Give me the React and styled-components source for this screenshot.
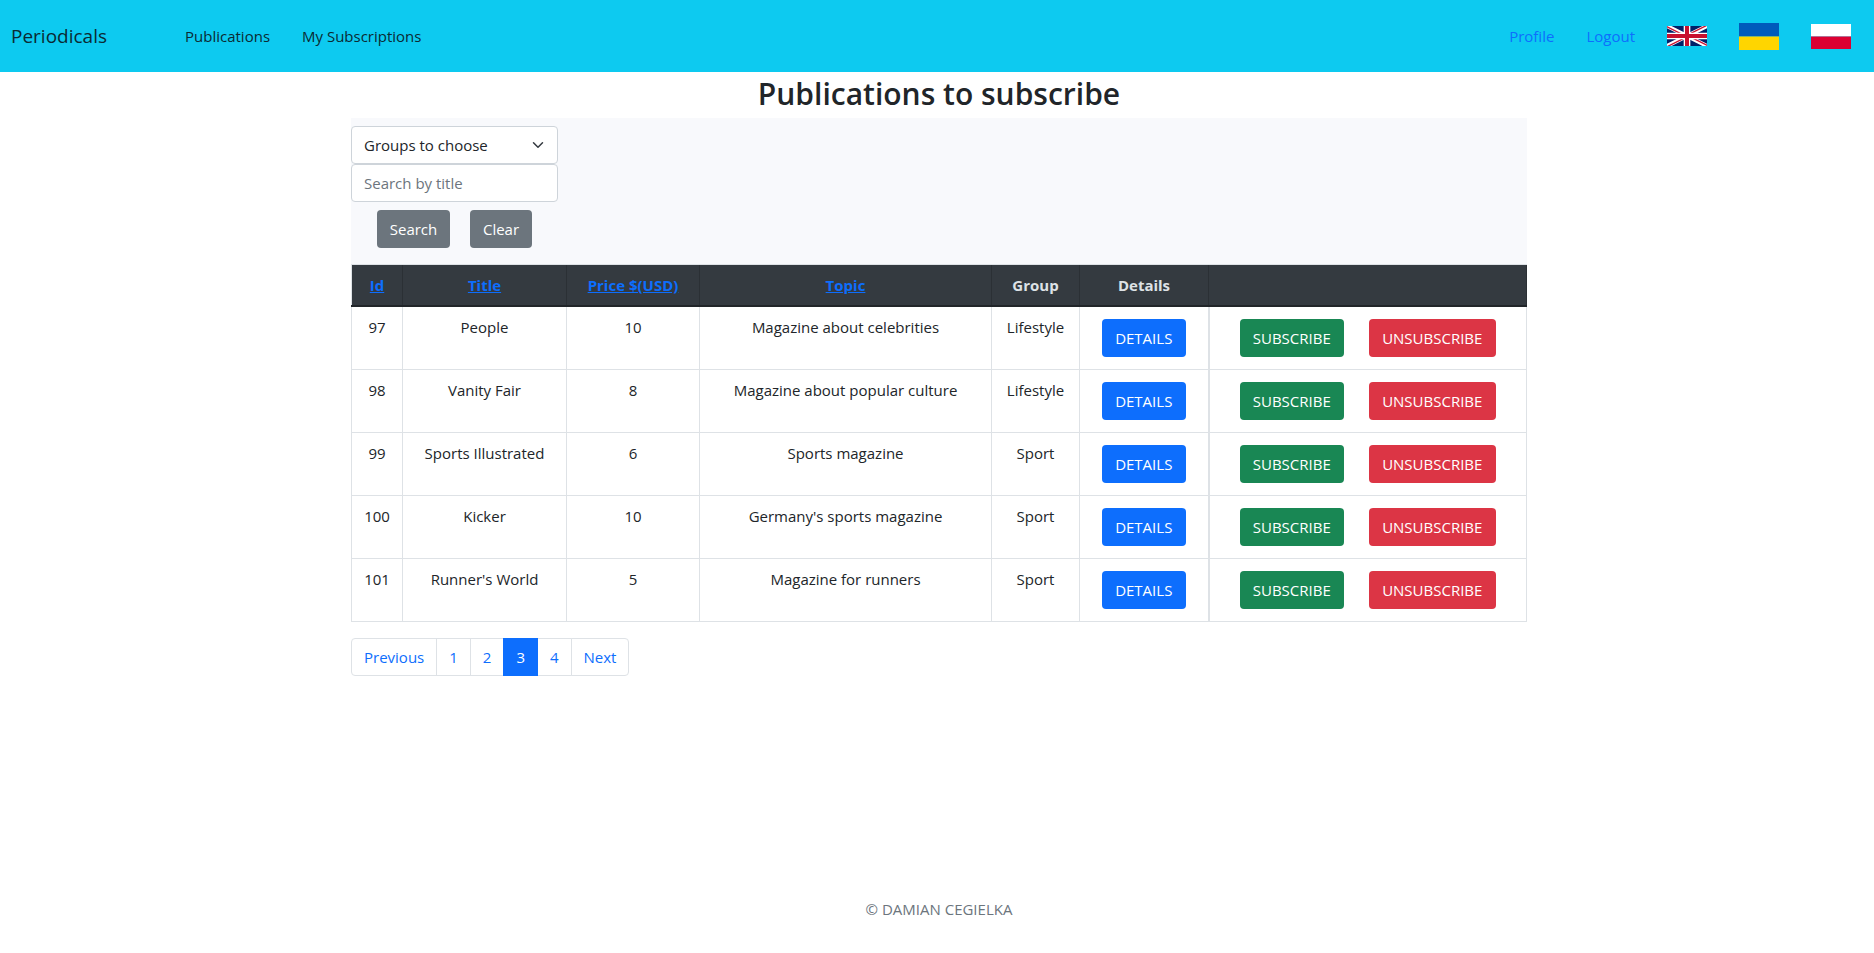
import React from "react";
import styled, { createGlobalStyle } from "styled-components";

const GlobalStyle = createGlobalStyle`
  *, *::before, *::after { box-sizing: border-box; }
  body {
    margin: 0;
    background: #fff;
    color: #212529;
    font-family: "Open Sans", "Noto Sans", sans-serif;
    font-size: 15px;
    line-height: 24px;
  }
  button, input, select { font: inherit; }
  a { color: #0d6efd; }
`;

const Page = styled.div`
  display: flex;
  flex-direction: column;
  min-height: 100vh;
`;

const NavBar = styled.nav`
  display: flex;
  align-items: center;
  height: 72px;
  padding: 0 23px 0 11px;
  background: #0dcaf0;
`;

const Brand = styled.a`
  margin-right: 78px;
  color: #0b2a33;
  font-size: 19px;
  text-decoration: none;
`;

const NavGroup = styled.div`
  display: flex;
  align-items: center;
  gap: 32px;
  margin-left: ${(p) => (p.$end ? "auto" : "0")};
`;

const NavLink = styled.a`
  display: flex;
  color: ${(p) => (p.$accent ? "#0d6efd" : "#0b2a33")};
  text-decoration: none;
`;

const Main = styled.main`
  width: 100%;
  max-width: 1180px;
  margin: 0 auto;
  padding-left: 4px;
`;

const Footer = styled.footer`
  margin-top: auto;
  padding: 32px 0 32px 4px;
  color: #6c757d;
  text-align: center;
`;

const Title = styled.h1`
  margin: 0;
  padding: 2px 0 4px;
  font-size: 30px;
  font-weight: 600;
  line-height: 40px;
  text-align: center;
`;

const Filters = styled.form`
  padding: 8px 0 16px;
  border-bottom: 1px solid #dee2e6;
  background: #f8f9fc;
`;

const Fields = styled.div`
  display: flex;
  flex-direction: column;
  width: 207px;
`;

const SelectWrap = styled.div`
  display: grid;
  align-items: center;
  > * { grid-area: 1 / 1; }
  svg {
    justify-self: end;
    margin-right: 12px;
    pointer-events: none;
  }
`;

const fieldLook = `
  width: 100%;
  height: 38px;
  padding: 0 12px;
  border: 1px solid #ced4da;
  border-radius: 4px;
  background: #fff;
  color: #212529;
`;

const Select = styled.select`
  ${fieldLook}
  appearance: none;
`;

const TextBox = styled.input`
  ${fieldLook}
  &::placeholder { color: #6c757d; opacity: 1; }
`;

const FilterActions = styled.div`
  display: flex;
  justify-content: center;
  gap: 20px;
  margin-top: 8px;
`;

const tones = {
  primary: "#0d6efd",
  secondary: "#6c757d",
  success: "#198754",
  danger: "#dc3545",
};

const Button = styled.button`
  min-width: ${(p) => p.$width}px;
  height: 38px;
  padding: 0 8px;
  border: 0;
  border-radius: 4px;
  background: ${(p) => tones[p.$tone]};
  color: #fff;
  cursor: pointer;
`;

const Table = styled.table`
  width: 100%;
  border-collapse: collapse;
  table-layout: fixed;
`;

const Col = styled.col`
  width: ${(p) => (p.$width ? `${p.$width}px` : "auto")};
`;

const HeadCell = styled.th`
  height: 41px;
  padding: 0;
  border: 1px solid #2b3035;
  border-top: 0;
  border-bottom: 2px solid #212529;
  background: #343a40;
  color: #dee2e6;
  font-weight: 700;
  &:first-child { border-left-color: #dee2e6; }
`;

const Cell = styled.td`
  height: 63px;
  padding: ${(p) => (p.$actions ? "12px 0" : "8px 0")};
  border: 1px solid #dee2e6;
  border-left-width: ${(p) => (p.$divided ? "2px" : "1px")};
  text-align: center;
  vertical-align: top;
`;

const RowActions = styled.div`
  display: flex;
  justify-content: center;
  gap: 25px;
`;

const Pagination = styled.ul`
  display: flex;
  margin: 16px 0 0;
  padding: 0;
  list-style: none;
`;

const PageItem = styled.li`
  & + & { margin-left: -1px; }
  &:first-child a { border-radius: 4px 0 0 4px; }
  &:last-child a { border-radius: 0 4px 4px 0; }
`;

const PageLink = styled.a`
  position: relative;
  z-index: ${(p) => (p.$active ? 1 : 0)};
  display: block;
  padding: 6px 12px;
  border: 1px solid ${(p) => (p.$active ? "#0d6efd" : "#dee2e6")};
  background: ${(p) => (p.$active ? "#0d6efd" : "#fff")};
  color: ${(p) => (p.$active ? "#fff" : "#0d6efd")};
  text-decoration: none;
`;

const UkFlag = () => (
  <svg width="40" height="20" viewBox="0 0 60 30" aria-hidden="true">
    <clipPath id="uk-quarters">
      <path d="M30,15h30v15zv15h-30zh-30v-15zv-15h30z" />
    </clipPath>
    <path d="M0,0v30h60v-30z" fill="#012169" />
    <path d="M0,0L60,30M60,0L0,30" stroke="#fff" strokeWidth="6" />
    <path d="M0,0L60,30M60,0L0,30" clipPath="url(#uk-quarters)" stroke="#c8102e" strokeWidth="4" />
    <path d="M30,0v30M0,15h60" stroke="#fff" strokeWidth="10" />
    <path d="M30,0v30M0,15h60" stroke="#c8102e" strokeWidth="6" />
  </svg>
);

const StripeFlag = ({ height, top, bottom }) => (
  <svg width="40" height={height} viewBox="0 0 40 26" preserveAspectRatio="none" aria-hidden="true">
    <path d="M0 0h40v13H0z" fill={top} />
    <path d="M0 13h40v13H0z" fill={bottom} />
  </svg>
);

const columns = [
  { label: "Id", width: 51, sortable: true },
  { label: "Title", width: 164, sortable: true },
  { label: "Price $(USD)", width: 133, sortable: true },
  { label: "Topic", sortable: true },
  { label: "Group", width: 88 },
  { label: "Details", width: 129 },
  { label: "", width: 318 },
];

const publications = [
  { id: 97, title: "People", price: 10, topic: "Magazine about celebrities", group: "Lifestyle" },
  { id: 98, title: "Vanity Fair", price: 8, topic: "Magazine about popular culture", group: "Lifestyle" },
  { id: 99, title: "Sports Illustrated", price: 6, topic: "Sports magazine", group: "Sport" },
  { id: 100, title: "Kicker", price: 10, topic: "Germany's sports magazine", group: "Sport" },
  { id: 101, title: "Runner's World", price: 5, topic: "Magazine for runners", group: "Sport" },
];

const pages = ["Previous", "1", "2", "3", "4", "Next"];

export default function App() {
  return (
    <Page>
      <GlobalStyle />
      <NavBar>
        <Brand href="#">Periodicals</Brand>
        <NavGroup>
          <NavLink href="#">Publications</NavLink>
          <NavLink href="#">My Subscriptions</NavLink>
        </NavGroup>
        <NavGroup $end>
          <NavLink href="#" $accent>Profile</NavLink>
          <NavLink href="#" $accent>Logout</NavLink>
          <NavLink href="#" aria-label="English"><UkFlag /></NavLink>
          <NavLink href="#" aria-label="Ukrainian">
            <StripeFlag height={27} top="#005bbb" bottom="#ffd500" />
          </NavLink>
          <NavLink href="#" aria-label="Polish">
            <StripeFlag height={25} top="#fff" bottom="#dc0032" />
          </NavLink>
        </NavGroup>
      </NavBar>
      <Main>
        <Title>Publications to subscribe</Title>
        <Filters onSubmit={(e) => e.preventDefault()}>
          <Fields>
            <SelectWrap>
              <Select aria-label="Group">
                <option>Groups to choose</option>
                <option>Lifestyle</option>
                <option>Sport</option>
              </Select>
              <svg width="16" height="12" viewBox="0 0 16 16" fill="none" stroke="#343a40" strokeWidth="2" strokeLinecap="round" strokeLinejoin="round" aria-hidden="true">
                <path d="M2 5l6 6 6-6" />
              </svg>
            </SelectWrap>
            <TextBox type="text" aria-label="Search by title" placeholder="Search by title" />
            <FilterActions>
              <Button type="submit" $tone="secondary" $width={73}>Search</Button>
              <Button type="reset" $tone="secondary" $width={62}>Clear</Button>
            </FilterActions>
          </Fields>
        </Filters>
        <Table>
          <colgroup>
            {columns.map((c) => <Col key={c.label} $width={c.width} />)}
          </colgroup>
          <thead>
            <tr>
              {columns.map((c) => (
                <HeadCell key={c.label} scope="col">
                  {c.sortable ? <a href="#">{c.label}</a> : c.label}
                </HeadCell>
              ))}
            </tr>
          </thead>
          <tbody>
            {publications.map((p) => (
              <tr key={p.id}>
                <Cell>{p.id}</Cell>
                <Cell>{p.title}</Cell>
                <Cell>{p.price}</Cell>
                <Cell>{p.topic}</Cell>
                <Cell>{p.group}</Cell>
                <Cell $actions>
                  <RowActions>
                    <Button type="button" $tone="primary" $width={84}>DETAILS</Button>
                  </RowActions>
                </Cell>
                <Cell $actions $divided>
                  <RowActions>
                    <Button type="button" $tone="success" $width={104}>SUBSCRIBE</Button>
                    <Button type="button" $tone="danger" $width={127}>UNSUBSCRIBE</Button>
                  </RowActions>
                </Cell>
              </tr>
            ))}
          </tbody>
        </Table>
        <nav aria-label="Pages">
          <Pagination>
            {pages.map((label) => (
              <PageItem key={label}>
                <PageLink href="#" $active={label === "3"} aria-current={label === "3" ? "page" : undefined}>
                  {label}
                </PageLink>
              </PageItem>
            ))}
          </Pagination>
        </nav>
      </Main>
      <Footer>© DAMIAN CEGIELKA</Footer>
    </Page>
  );
}
